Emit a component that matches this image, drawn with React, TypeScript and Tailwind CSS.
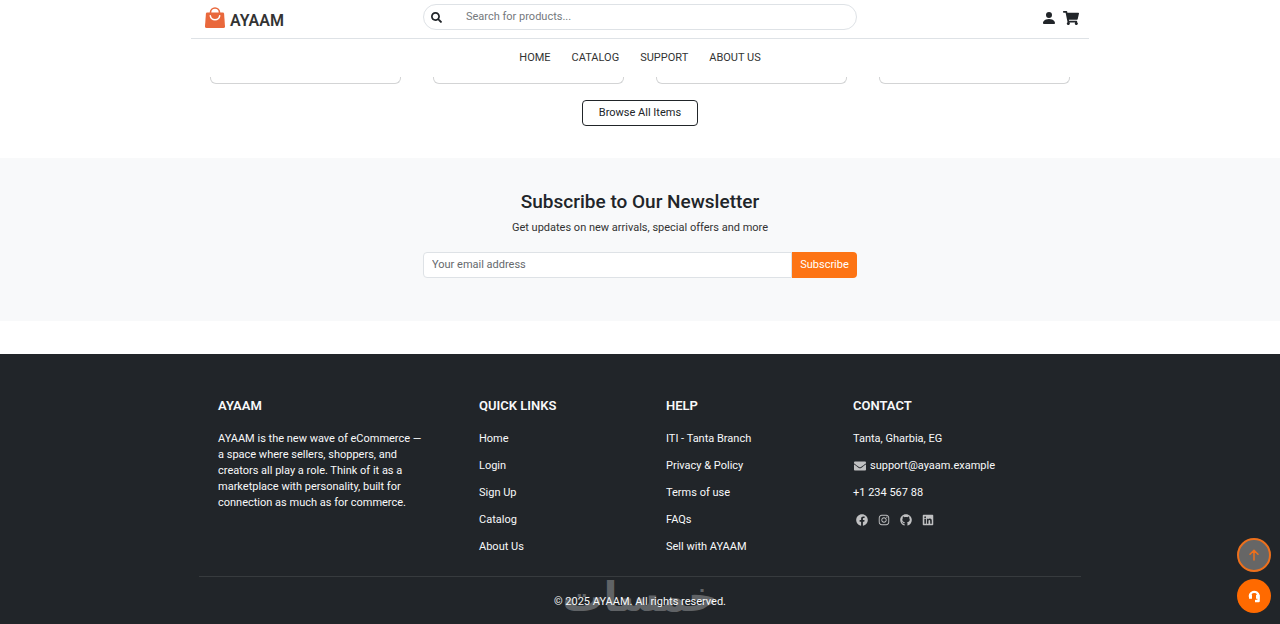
import {
  FaEnvelope,
  FaFacebook,
  FaGithub,
  FaInstagram,
  FaLinkedin,
  FaSearch,
  FaShoppingCart,
} from 'react-icons/fa';
import { BsPersonFill } from 'react-icons/bs';

const navLinks = ['HOME', 'CATALOG', 'SUPPORT', 'ABOUT US'];
const products = [1, 2, 3, 4];
const quickLinks = ['Home', 'Login', 'Sign Up', 'Catalog', 'About Us'];
const helpLinks = ['ITI - Tanta Branch', 'Privacy & Policy', 'Terms of use', 'FAQs', 'Sell with AYAAM'];

const socials = [
  { name: 'Facebook', Icon: FaFacebook },
  { name: 'Instagram', Icon: FaInstagram },
  { name: 'GitHub', Icon: FaGithub },
  { name: 'LinkedIn', Icon: FaLinkedin },
];

function BagLogo() {
  return (
    <svg viewBox="0 0 20 22" className="h-[22px] w-5" aria-hidden="true">
      <path d="M5.5 8V5.5a4.5 4.5 0 0 1 9 0V8" fill="none" stroke="#e9683c" strokeWidth="1.6" />
      <path d="M2.2 5.5h15.6q1.2 0 1.3 1.2l.9 12.6q.1 1.7-1.5 1.7h-17q-1.6 0-1.5-1.7l.9-12.6Q1 5.5 2.2 5.5Z" fill="#e9683c" />
      <path d="M5.3 8.8a4.8 4.8 0 0 0 9.4 0" fill="none" stroke="#fff" strokeWidth="1.5" strokeLinecap="round" />
    </svg>
  );
}

function ArrowUpIcon() {
  return (
    <svg viewBox="0 0 14 14" className="size-[14px]" fill="none" stroke="currentColor" strokeWidth="1.5" aria-hidden="true">
      <path d="M7 12V2.5M3 6.3l4-4 4 4" strokeLinecap="round" strokeLinejoin="round" />
    </svg>
  );
}

function SupportIcon() {
  return (
    <svg viewBox="0 0 14 14" className="size-[14px]" fill="none" aria-hidden="true">
      <path
        d="M3.3 9.2A4.4 4.4 0 1 1 11.6 6.6V12H8"
        stroke="currentColor"
        strokeWidth="2.4"
        strokeLinejoin="round"
      />
      <path d="M2 5.8h3v4H3.2Q2 9.8 2 8.4ZM9 5.8h3.4v4H9Z" fill="currentColor" />
      <path d="M5.2 5h4M7.2 5v4.3M5.8 9.6h3" stroke="#ff6a00" strokeWidth="1.2" />
    </svg>
  );
}

function Header() {
  return (
    <header className="bg-white">
      <div className="mx-auto max-w-[898px]">
        <div className="grid h-[39px] grid-cols-[1fr_434px_1fr] items-start border-b border-[#dee2e6]">
          <a href="#" className="flex items-start gap-[5px] pt-[7px] pl-[14px] text-[16px] text-[#333]">
            <BagLogo />
            <span className="pt-[2px] leading-6 font-semibold">AYAAM</span>
          </a>
          <form className="mt-1 flex h-[26px] items-center rounded-full border border-[#dee2e6] px-[7px]">
            <button type="submit" aria-label="Search" className="text-[11px] text-[#212529]">
              <FaSearch />
            </button>
            <input
              type="search"
              aria-label="Search for products"
              placeholder="Search for products..."
              className="ml-6 w-full bg-transparent text-[11px] leading-4 outline-none placeholder:text-[#75797d]"
            />
          </form>
          <div className="flex justify-end gap-[6px] pt-[10px] pr-[10px] text-[#212529]">
            <a href="#" aria-label="Account">
              <BsPersonFill size={16} />
            </a>
            <a href="#" aria-label="Cart">
              <FaShoppingCart size={16} />
            </a>
          </div>
        </div>
        <nav className="flex h-[38px] items-center justify-center gap-[21px] text-[11px] text-[#333]">
          {navLinks.map((link) => (
            <a key={link} href="#">
              {link}
            </a>
          ))}
        </nav>
      </div>
    </header>
  );
}

function Newsletter() {
  return (
    <section className="bg-[#f8f9fa] pt-8 pb-[43px] text-center">
      <h2 className="text-[19px] leading-6 font-medium text-[#212529]">Subscribe to Our Newsletter</h2>
      <p className="mt-[6px] text-[11px] leading-4">Get updates on new arrivals, special offers and more</p>
      <form className="mx-auto mt-4 flex h-[26px] max-w-[434px]">
        <input
          type="email"
          aria-label="Your email address"
          placeholder="Your email address"
          className="min-w-0 flex-1 rounded-l-[4px] border border-[#dee2e6] bg-white px-2 text-[11px] outline-none placeholder:text-[#65696d]"
        />
        <button type="submit" className="w-[65px] rounded-r-[4px] bg-[#fd7414] text-[11px] text-white">
          Subscribe
        </button>
      </form>
    </section>
  );
}

function LinkColumn({ title, links }: { title: string; links: string[] }) {
  return (
    <div>
      <h3 className="text-[13px] leading-4 font-semibold">{title}</h3>
      <ul className="mt-[17px] space-y-[11px]">
        {links.map((link) => (
          <li key={link}>
            <a href="#">{link}</a>
          </li>
        ))}
      </ul>
    </div>
  );
}

function Footer() {
  return (
    <footer className="grow bg-[#212529] pt-11 text-[11px] leading-4 text-[#f8f9fa]">
      <div className="mx-auto max-w-[882px]">
        <div className="grid grid-cols-[261fr_187fr_187fr_228fr] pl-[19px]">
          <div>
            <h3 className="text-[13px] leading-4 font-semibold">AYAAM</h3>
            <p className="mt-[17px] max-w-[210px]">
              AYAAM is the new wave of eCommerce — a space where sellers, shoppers, and creators all play a role. Think
              of it as a marketplace with personality, built for connection as much as for commerce.
            </p>
          </div>
          <LinkColumn title="QUICK LINKS" links={quickLinks} />
          <LinkColumn title="HELP" links={helpLinks} />
          <div>
            <h3 className="text-[13px] leading-4 font-semibold">CONTACT</h3>
            <ul className="mt-[17px] space-y-[11px]">
              <li>Tanta, Gharbia, EG</li>
              <li>
                <a href="#" className="flex items-center gap-1">
                  <FaEnvelope size={12} className="ml-px text-[#bfc0c1]" />
                  support@ayaam.example
                </a>
              </li>
              <li>+1 234 567 88</li>
              <li className="flex h-4 items-center gap-[10px] pl-[3px] text-[#bfc0c1]">
                {socials.map(({ name, Icon }) => (
                  <a key={name} href="#" aria-label={name}>
                    <Icon size={12} />
                  </a>
                ))}
              </li>
            </ul>
          </div>
        </div>
        <div className="relative mt-[21px] border-t border-[#373b3e] pt-[17px] pb-[14px] text-center">
          {/* Marketplace watermark over the copyright line */}
          <span
            lang="ar"
            dir="rtl"
            className="absolute inset-x-0 top-1 font-['DejaVu_Sans'] text-[41px] leading-8 font-bold text-[#606366]"
          >
            خمسات
          </span>
          <p className="relative">© 2025 AYAAM. All rights reserved.</p>
        </div>
      </div>
    </footer>
  );
}

function FloatingButtons() {
  return (
    <div className="fixed right-[9px] bottom-[11px] flex flex-col gap-[7px]">
      <button
        type="button"
        aria-label="Back to top"
        className="flex size-[34px] items-center justify-center rounded-full border-2 border-[#ed701c] bg-[#666] text-[#ed701c]"
      >
        <ArrowUpIcon />
      </button>
      <button
        type="button"
        aria-label="Support chat"
        className="flex size-[34px] items-center justify-center rounded-full bg-[#ff6a00] text-white"
      >
        <SupportIcon />
      </button>
    </div>
  );
}

export default function App() {
  return (
    <div className="flex min-h-screen flex-col bg-white font-[Roboto,sans-serif] text-[#333]">
      <Header />
      <main>
        <section className="mx-auto max-w-[860px] text-center">
          <div className="grid grid-cols-4 gap-8">
            {products.map((id) => (
              <div key={id} className="h-[7px] rounded-b-[6px] border-x border-b border-[#d3d4d5]" />
            ))}
          </div>
          <button
            type="button"
            className="mt-4 mb-8 h-[26px] w-[116px] rounded-[4px] border border-[#212529] text-[11px] text-[#212529]"
          >
            Browse All Items
          </button>
        </section>
        <Newsletter />
      </main>
      <div className="h-[33px]" />
      <Footer />
      <FloatingButtons />
    </div>
  );
}
